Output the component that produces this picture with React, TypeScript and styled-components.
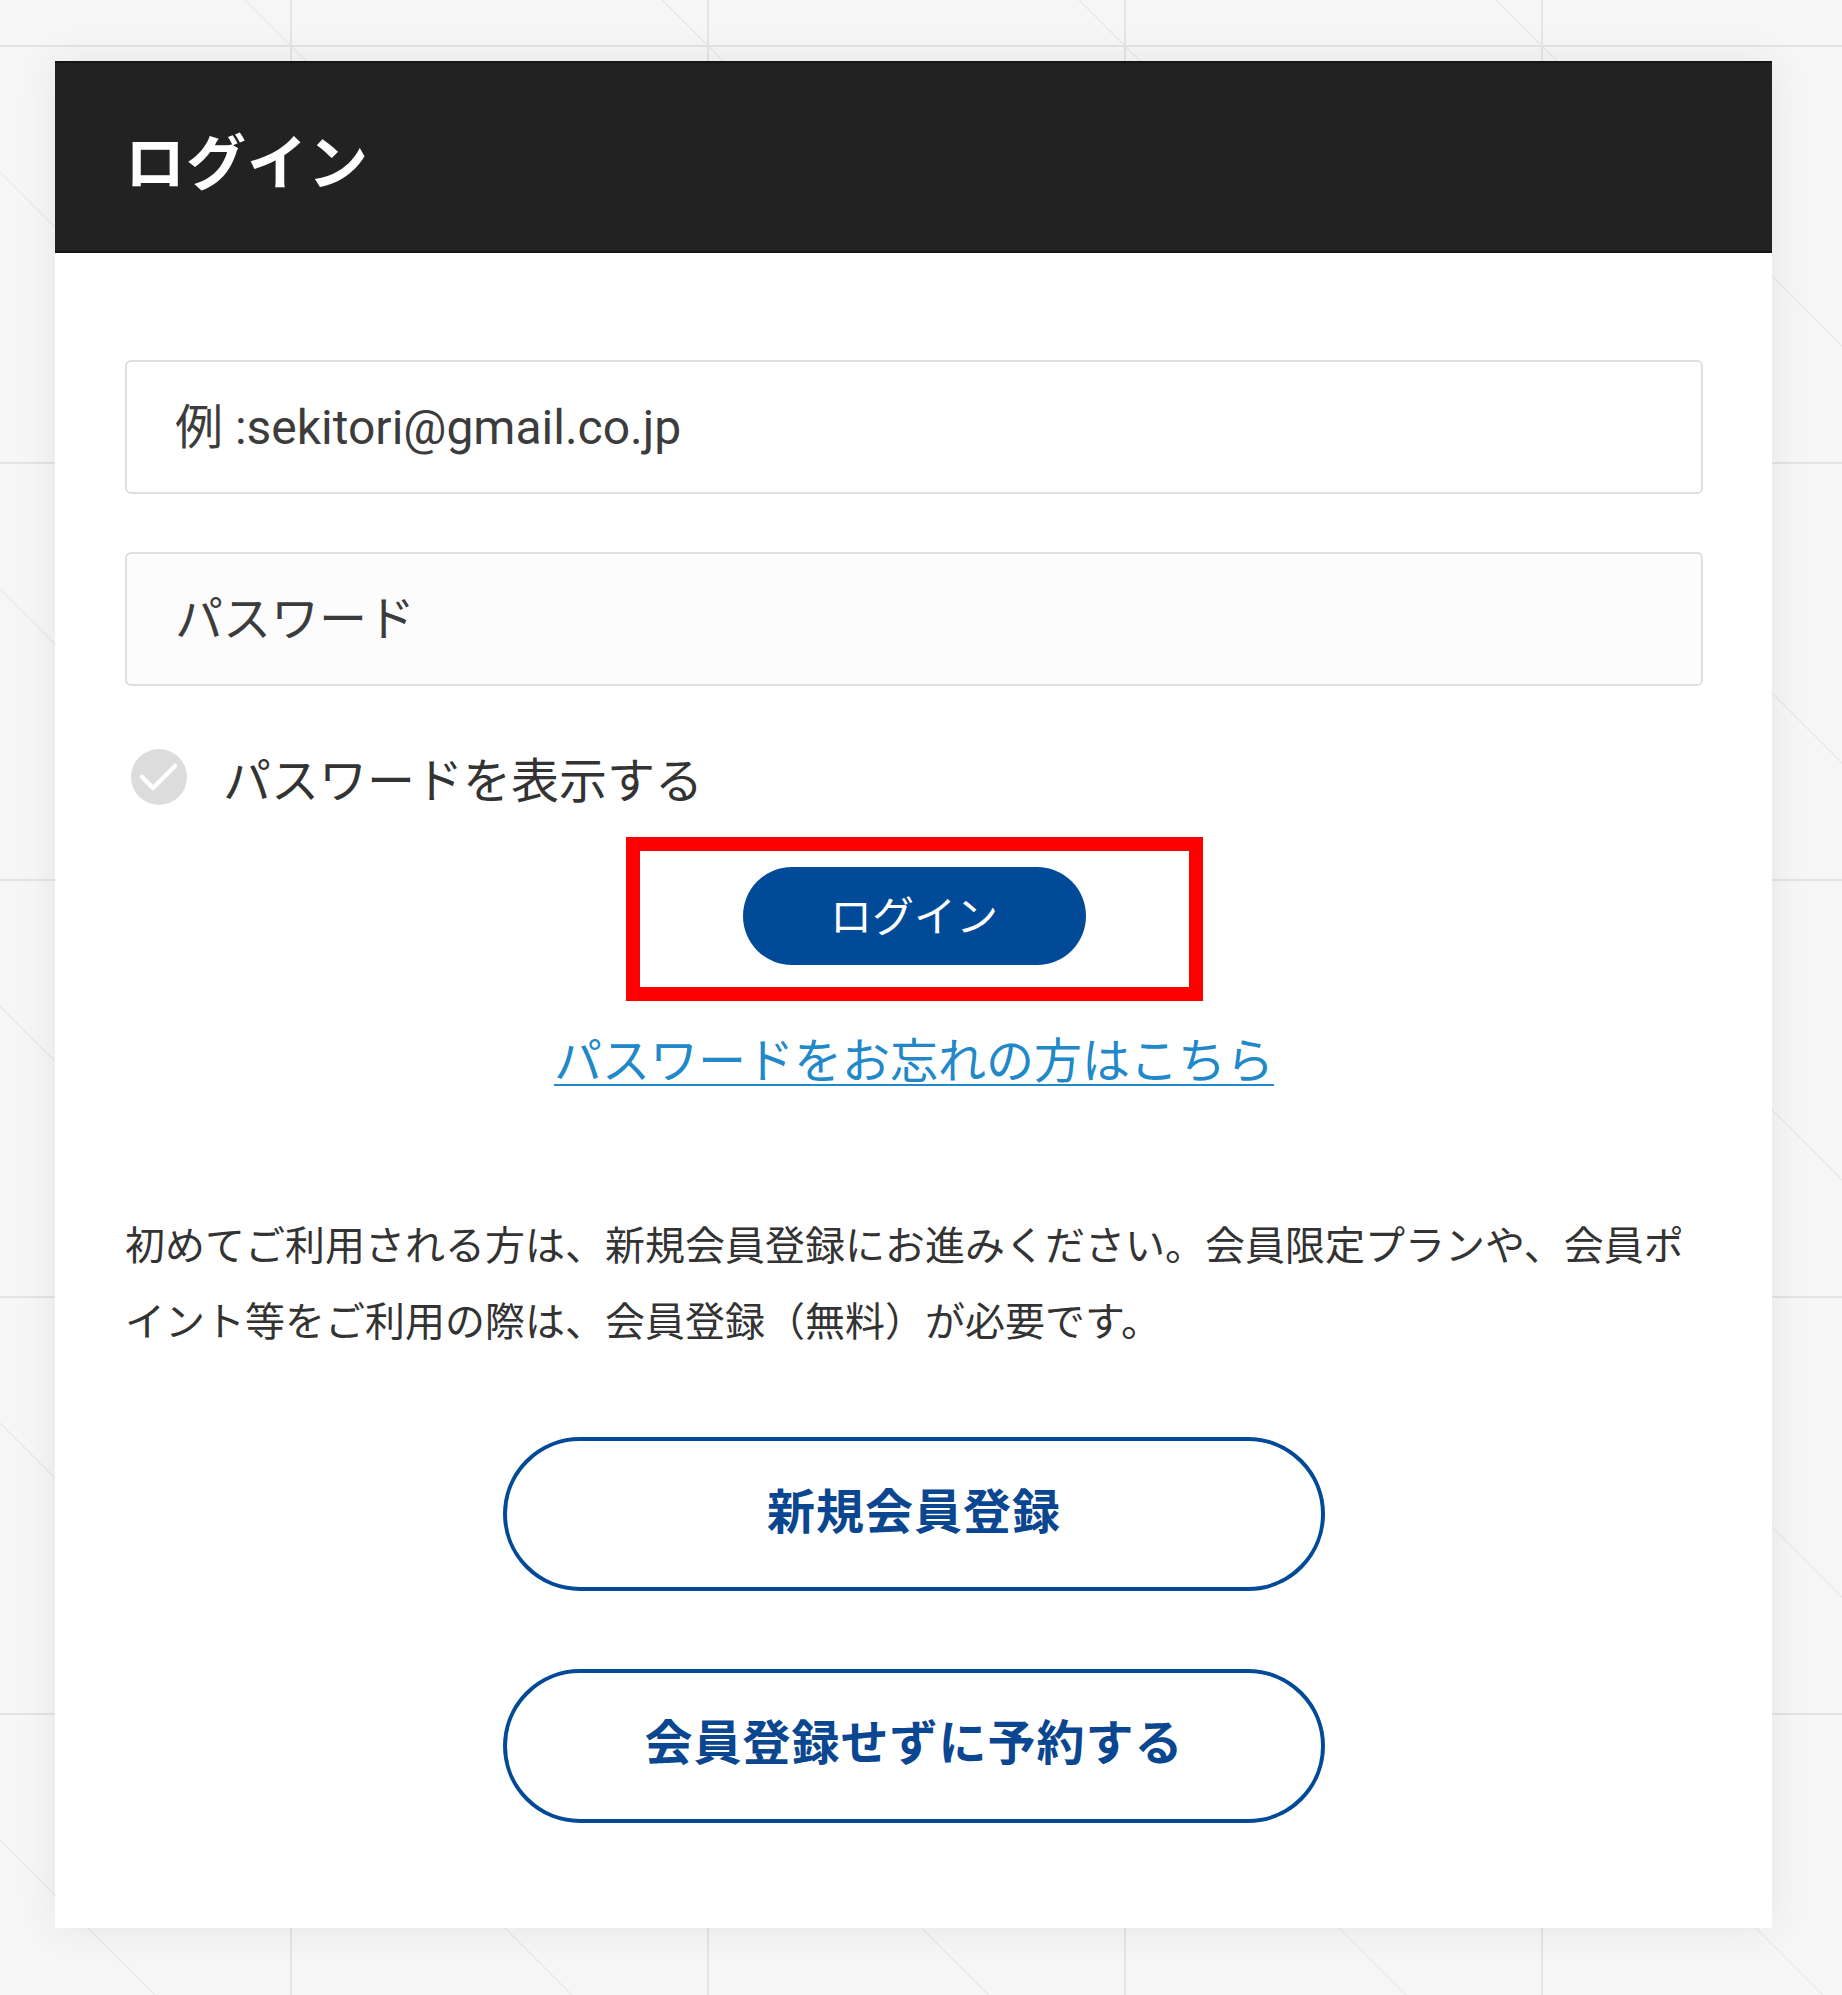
import styled, { createGlobalStyle } from 'styled-components';

const GlobalStyle = createGlobalStyle`
  html, body {
    margin: 0;
    padding: 0;
  }
  body {
    font-family: Roboto, "Noto Sans CJK JP", sans-serif;
    background-color: #f6f6f6;
    background-image:
      linear-gradient(to top right, transparent calc(50% - 1px), #e6e6e6 50%, transparent calc(50% + 1px)),
      linear-gradient(to right, #e4e4e4 2px, transparent 2px),
      linear-gradient(to bottom, #e4e4e4 2px, transparent 2px);
    background-size: 417px 417px;
    background-position: 290px 45px;
  }
`

const Page = styled.div`
  padding: 61px 70px 70px 55px;
`

const Card = styled.section`
  background: #fff;
  box-shadow: 0 0 40px rgba(0, 0, 0, 0.07);
`

const CardHeader = styled.header`
  height: 192px;
  box-sizing: border-box;
  padding: 2px 70px 0;
  display: flex;
  align-items: center;
  background: #222;
  border-top: 2px solid #151515;
  border-bottom: 2px solid #151515;
`

const Title = styled.h1`
  margin: 0;
  font-size: 60px;
  font-weight: 700;
  color: #fff;
  letter-spacing: 1px;
`

const CardBody = styled.div`
  padding: 107px 69px 105px 70px;
  display: flex;
  flex-direction: column;
`

const Field = styled.input<{ $tinted?: boolean }>`
  height: 134px;
  box-sizing: border-box;
  width: 100%;
  margin: 0 0 ${p => (p.$tinted ? 0 : 58)}px;
  padding: 0 48px;
  border: 2px solid #dfdfdf;
  border-radius: 6px;
  background: ${p => (p.$tinted ? '#fcfcfc' : '#fff')};
  font-family: Roboto, "Noto Sans CJK JP", sans-serif;
  font-size: 48px;
  color: #333;
  outline: none;

  &::placeholder {
    color: #3c3c3c;
  }
`

const CheckRow = styled.label`
  margin-top: 63px;
  height: 56px;
  display: flex;
  align-items: center;
  gap: 36px;
  padding-left: 6px;
  font-size: 48px;
  color: #333;
`

const CheckCircle = styled.span`
  width: 56px;
  height: 56px;
  border-radius: 50%;
  background: #dcdcdc;
  display: flex;
  flex-shrink: 0;
`

const Highlight = styled.div`
  align-self: center;
  margin-top: 32px;
  border: 14px solid #ff0000;
  padding: 16px 103px 22px;
`

const PrimaryButton = styled.button`
  width: 343px;
  height: 98px;
  box-sizing: border-box;
  padding: 0 0 6px;
  border: none;
  border-radius: 49px;
  background: #004a98;
  color: #fff;
  font-family: Roboto, "Noto Sans CJK JP", sans-serif;
  font-size: 42px;
  font-weight: 400;
  display: block;
`

const ForgotLink = styled.a`
  align-self: center;
  margin-top: 25px;
  font-size: 48px;
  line-height: 72px;
  color: #2188c9;
  text-decoration: underline;
  text-decoration-thickness: 2px;
  text-underline-offset: 6px;
`

const Note = styled.p`
  margin: 111px 0 0;
  font-size: 40px;
  line-height: 76px;
  color: #333;
`

const OutlineButton = styled.button<{ $first?: boolean }>`
  align-self: center;
  margin-top: ${p => (p.$first ? 76 : 78)}px;
  width: 822px;
  height: 154px;
  box-sizing: border-box;
  padding: 0 0 ${p => (p.$first ? 12 : 14)}px;
  border: 4px solid #004a98;
  border-radius: 77px;
  background: #fff;
  color: #0b4690;
  font-family: Roboto, "Noto Sans CJK JP", sans-serif;
  font-size: 48px;
  font-weight: 700;
  letter-spacing: 1px;
`

export default function App() {
  return (
    <>
      <GlobalStyle />
      <Page>
        <Card>
          <CardHeader>
            <Title>ログイン</Title>
          </CardHeader>
          <CardBody>
            <Field type="email" placeholder="例 :sekitori@gmail.co.jp" />
            <Field type="password" placeholder="パスワード" $tinted />
            <CheckRow>
              <CheckCircle>
                <svg width="56" height="56" viewBox="0 0 56 56">
                  <path d="M11 28 L22 39 L44 17" fill="none" stroke="#fff" strokeWidth="4.5" strokeLinecap="round" strokeLinejoin="round" />
                </svg>
              </CheckCircle>
              パスワードを表示する
            </CheckRow>
            <Highlight>
              <PrimaryButton>ログイン</PrimaryButton>
            </Highlight>
            <ForgotLink href="#">パスワードをお忘れの方はこちら</ForgotLink>
            <Note>
              初めてご利用される方は、新規会員登録にお進みください。会員限定プランや、会員ポイント等をご利用の際は、会員登録（無料）が必要です。
            </Note>
            <OutlineButton $first>新規会員登録</OutlineButton>
            <OutlineButton>会員登録せずに予約する</OutlineButton>
          </CardBody>
        </Card>
      </Page>
    </>
  );
}
